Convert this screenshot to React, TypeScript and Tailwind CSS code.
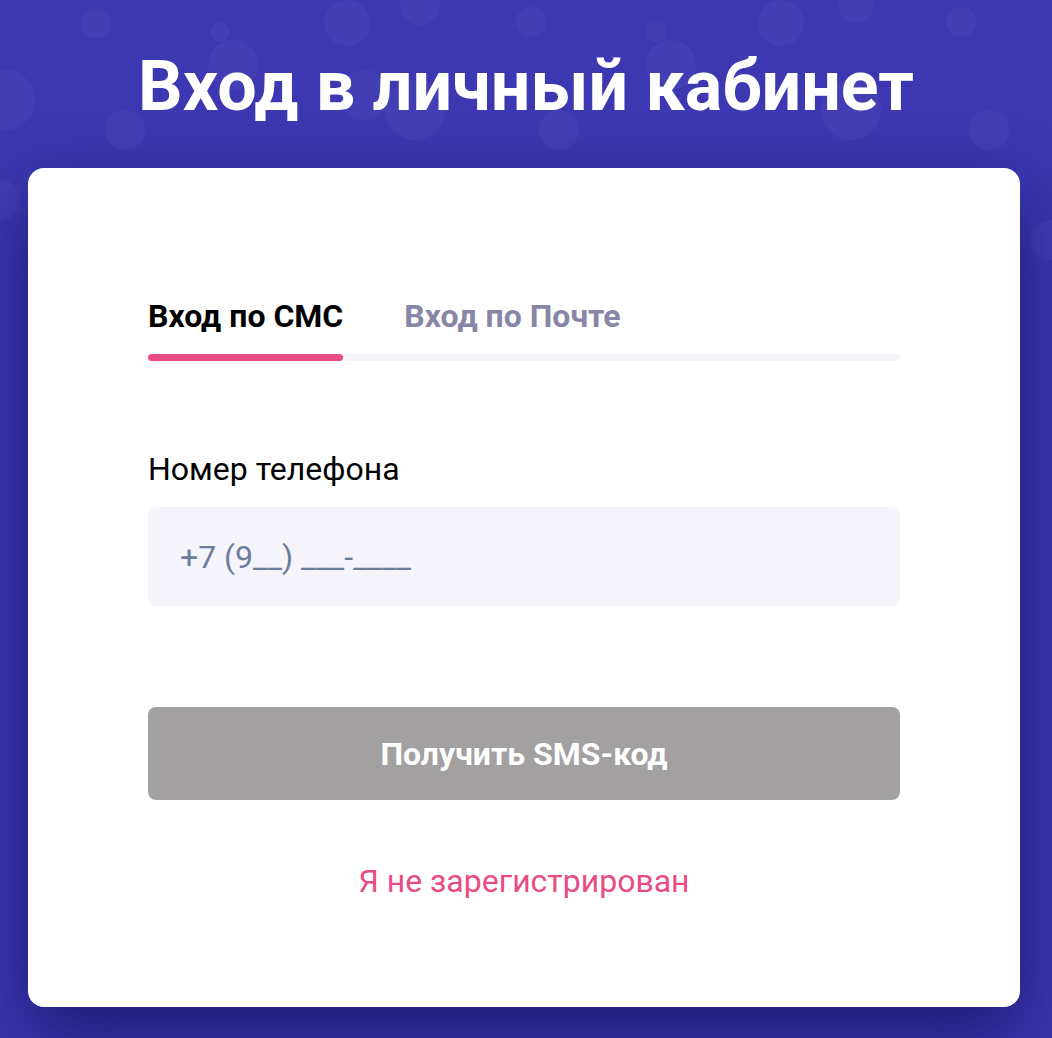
import React from 'react';

const bubbles = [
  'left-[81px] top-[8px] w-[30px] h-[30px]',
  'left-[210px] top-[22px] w-[20px] h-[20px]',
  'left-[324px] top-0 w-[46px] h-[46px]',
  'left-[400px] top-[-15px] w-[40px] h-[40px]',
  'left-[208px] top-[40px] w-[50px] h-[50px]',
  'left-[105px] top-[110px] w-[40px] h-[40px]',
  'left-[-25px] top-[70px] w-[60px] h-[60px]',
  'left-[340px] top-[70px] w-[50px] h-[50px]',
  'left-[385px] top-[80px] w-[60px] h-[60px]',
  'left-[516px] top-[7px] w-[30px] h-[30px]',
  'left-[646px] top-[22px] w-[20px] h-[20px]',
  'left-[758px] top-0 w-[46px] h-[46px]',
  'left-[838px] top-[-13px] w-[36px] h-[36px]',
  'left-[946px] top-[7px] w-[30px] h-[30px]',
  'left-[646px] top-[40px] w-[50px] h-[50px]',
  'left-[539px] top-[110px] w-[40px] h-[40px]',
  'left-[821px] top-[80px] w-[60px] h-[60px]',
  'left-[969px] top-[110px] w-[40px] h-[40px]',
  'left-[-20px] top-[180px] w-[40px] h-[40px]',
  'left-[1030px] top-[220px] w-[40px] h-[40px]',
];

const App = () => {
  return (
    <div
      className="relative min-h-screen overflow-hidden bg-[#3b38b1] pb-[32px]"
      style={{ fontFamily: 'Roboto, "Noto Sans", sans-serif' }}
    >
      {/* decorative bubbles */}
      {bubbles.map((c, i) => (
        <div key={i} className={`absolute rounded-full bg-white/[0.035] ${c}`} />
      ))}

      <div className="relative flex flex-col items-center pt-[51px]">
        <h1 className="text-[70px] leading-none font-bold text-white mb-[47px]">
          Вход в личный кабинет
        </h1>

        {/* Card */}
        <div className="w-[992px] self-start ml-[28px] rounded-[16px] bg-white px-[120px] pt-[132px] pb-[110px] shadow-[0_30px_70px_rgba(22,16,96,0.75)]">
          {/* Tabs */}
          <div className="flex gap-[61px] text-[32px] leading-none font-bold">
            <span className="text-black">Вход по СМС</span>
            <span className="text-[#8886a6]">Вход по Почте</span>
          </div>
          <div className="mt-[22px] h-[7px] rounded-full bg-[#f5f4fa] flex">
            <div className="h-full w-[195px] rounded-full bg-[#e94c84]" />
          </div>

          {/* Phone */}
          <label className="block mt-[92px] text-[32px] leading-none text-black">
            Номер телефона
          </label>
          <div className="mt-[22px] h-[99px] rounded-[8px] bg-[#f4f4fa] flex items-center px-[32px]">
            <span className="text-[32px] text-[#6e7c9c]">+7 (9__) ___-____</span>
          </div>

          <button className="mt-[101px] w-full h-[93px] rounded-[8px] bg-[#a2a0a1] text-white text-[32px] font-bold">
            Получить SMS-код
          </button>

          <div className="mt-[65px] text-center text-[32px] leading-none text-[#e94c84]">
            Я не зарегистрирован
          </div>
        </div>
      </div>
    </div>
  );
};

export default App;
